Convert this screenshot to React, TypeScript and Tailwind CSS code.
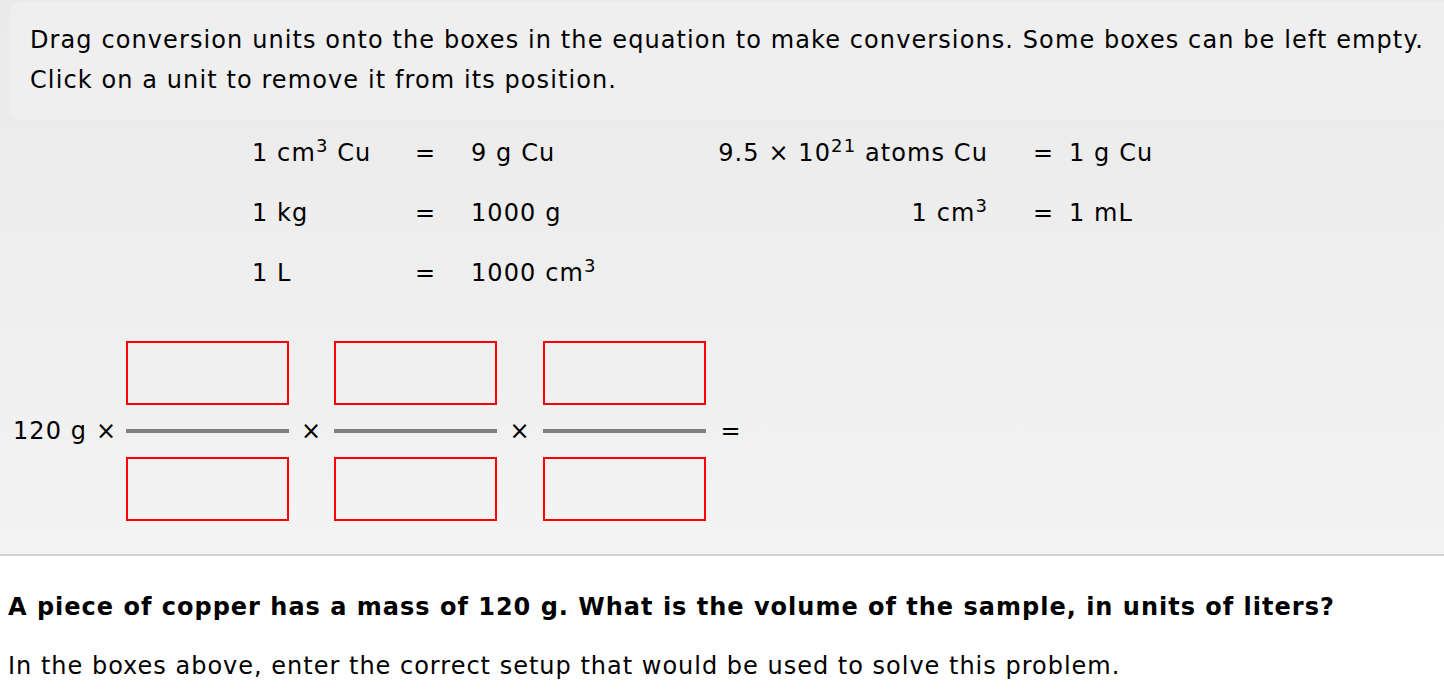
import React from 'react';

const font = { fontFamily: '"DejaVu Sans", Verdana, sans-serif' };

function Fraction() {
    return (
        <div className="flex flex-col w-[163px]">
            <div className="h-[64px] border-2 border-[#ff0000]" />
            <div className="h-[4px] bg-[#808080] mt-[24px] mb-[24px]" />
            <div className="h-[64px] border-2 border-[#ff0000]" />
        </div>
    );
}

export default function App() {
    return (
        <div className="w-[1444px] h-[689px] overflow-hidden bg-white text-black text-[24px] tracking-[1.1px]" style={font}>
            {/* top panel */}
            <div className="bg-gradient-to-b from-[#eaeaea] to-[#f3f3f3] pt-[2px] pb-[33px] border-b-2 border-[#d2d2d2]">
                <div className="ml-[10px] rounded-l-[10px] bg-[#efefef] pl-[20px] pt-[18px] pb-[20px] leading-[40px]">
                    <p>Drag conversion units onto the boxes in the equation to make conversions. Some boxes can be left empty.</p>
                    <p>Click on a unit to remove it from its position.</p>
                </div>

                {/* conversion units */}
                <div className="flex pl-[252px] pt-[3px] leading-[60px]">
                    <div className="grid grid-cols-[163px_56px_239px]">
                        <div>1 cm<sup>3</sup> Cu</div>
                        <div>=</div>
                        <div>9 g Cu</div>
                        <div>1 kg</div>
                        <div>=</div>
                        <div>1000 g</div>
                        <div>1 L</div>
                        <div>=</div>
                        <div>1000 cm<sup>3</sup></div>
                    </div>
                    <div className="grid grid-cols-[278px_81px_120px] content-start">
                        <div className="text-right">9.5 × 10<sup>21</sup> atoms Cu</div>
                        <div className="pl-[45px]">=</div>
                        <div>1 g Cu</div>
                        <div className="text-right">1 cm<sup>3</sup></div>
                        <div className="pl-[45px]">=</div>
                        <div>1 mL</div>
                    </div>
                </div>

                {/* equation */}
                <div className="flex items-center mt-[38px] pl-[13px]">
                    <span className="w-[113px]">120 g ×</span>
                    <Fraction />
                    <span className="w-[45px] text-center">×</span>
                    <Fraction />
                    <span className="w-[46px] text-center">×</span>
                    <Fraction />
                    <span className="w-[50px] text-center">=</span>
                </div>
            </div>

            {/* question */}
            <div className="pl-[8px] pt-[31px] leading-[40px] tracking-[1px]">
                <p className="font-bold">A piece of copper has a mass of 120 g. What is the volume of the sample, in units of liters?</p>
                <p className="mt-[19px]">In the boxes above, enter the correct setup that would be used to solve this problem.</p>
            </div>
        </div>
    );
}
